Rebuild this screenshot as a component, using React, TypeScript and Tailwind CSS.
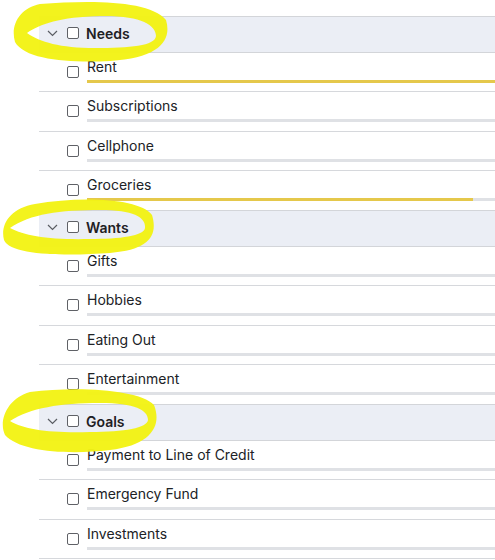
import React from "react";

type Item = { name: string; fill: number | null };
type Group = { title: string; items: Item[] };

const groups: Group[] = [
  {
    title: "Needs",
    items: [
      { name: "Rent", fill: 1000 },
      { name: "Subscriptions", fill: null },
      { name: "Cellphone", fill: null },
      { name: "Groceries", fill: 386 },
    ],
  },
  {
    title: "Wants",
    items: [
      { name: "Gifts", fill: null },
      { name: "Hobbies", fill: null },
      { name: "Eating Out", fill: null },
      { name: "Entertainment", fill: null },
    ],
  },
  {
    title: "Goals",
    items: [
      { name: "Payment to Line of Credit", fill: null },
      { name: "Emergency Fund", fill: null },
      { name: "Investments", fill: null },
    ],
  },
];

function Box() {
  return (
    <span className="block w-[12px] h-[12px] shrink-0 rounded-[2px] border border-[#5f6166] bg-white" />
  );
}

function Chevron() {
  return (
    <svg width="11" height="7" viewBox="0 0 11 7" className="shrink-0">
      <polyline points="1,1 5.5,5.5 10,1" fill="none" stroke="#5a5d63" strokeWidth="1.2" />
    </svg>
  );
}

function Row({ item, border }: { item: Item; border: boolean }) {
  return (
    <div
      className={
        border
          ? "h-[39.25px] flex items-start pl-[28px] pt-[4px] border-b border-[#d6d8dc]"
          : "h-[39.25px] flex items-start pl-[28px] pt-[4px]"
      }
    >
      <div className="mt-[9px] mr-[8px]">
        <Box />
      </div>
      <div className="flex-1 flex flex-col">
        <div className="text-[14px] leading-[20px] text-[#202226]">{item.name}</div>
        <div className="mt-[3px] h-[3px] bg-[#dfe1e5] relative">
          {item.fill !== null && (
            <div
              className="absolute left-0 top-0 h-[3px] bg-[#e5c84b]"
              style={{ width: item.fill >= 1000 ? "100%" : `${item.fill}px` }}
            />
          )}
        </div>
      </div>
    </div>
  );
}

export default function App() {
  return (
    <div
      className="relative w-[495px] h-[560px] bg-white overflow-hidden"
      style={{ fontFamily: "Inter, 'Noto Sans', sans-serif" }}
    >
      <div className="pt-[16px] pl-[39px]">
        {groups.map((g, gi) => (
          <div key={g.title}>
            <div className="h-[37px] flex items-center pl-[8px] pb-[3px] bg-[#ebeef5] border-y border-[#d3d5d9]">
              <div className="w-[20px] flex items-center">
                <Chevron />
              </div>
              <div className="mr-[7px]">
                <Box />
              </div>
              <span className="text-[14px] font-semibold text-[#1e2024]">{g.title}</span>
            </div>
            {g.items.map((it, i) => (
              <Row
                key={it.name}
                item={it}
                border={i < g.items.length - 1 || gi === groups.length - 1}
              />
            ))}
          </div>
        ))}
      </div>
      <svg
        className="absolute left-0 top-0 pointer-events-none"
        width="495"
        height="560"
        viewBox="0 0 495 560"
      >
        <g fill="#f3f316" fillRule="evenodd" opacity="0.97">
          <path d="M 40 4 C 90 0, 150 0, 166 20 C 172 40, 160 58, 110 61 C 70 63, 25 60, 15 42 C 10 25, 20 8, 40 4 Z M 27 33 C 40 24, 60 17, 100 16 C 140 15, 156 25, 156 36 C 155 46, 130 48, 95 48 C 60 48, 40 42, 27 33 Z" />
          <path d="M 35 204 C 80 196, 140 198, 152 215 C 158 235, 150 250, 110 253 C 70 256, 10 256, 4 240 C 0 225, 10 208, 35 204 Z M 10 228 C 30 214, 60 210, 100 210 C 135 210, 146 218, 145 228 C 144 236, 120 239, 90 239 C 50 240, 25 236, 10 228 Z" />
          <path d="M 30 392 C 80 386, 140 390, 154 405 C 162 425, 152 445, 110 450 C 70 455, 20 452, 5 435 C -2 420, 8 398, 30 392 Z M 10 421 C 30 408, 60 403, 100 403 C 135 403, 148 410, 148 420 C 147 428, 125 432, 90 432 C 50 433, 25 430, 10 421 Z" />
        </g>
      </svg>
    </div>
  );
}
